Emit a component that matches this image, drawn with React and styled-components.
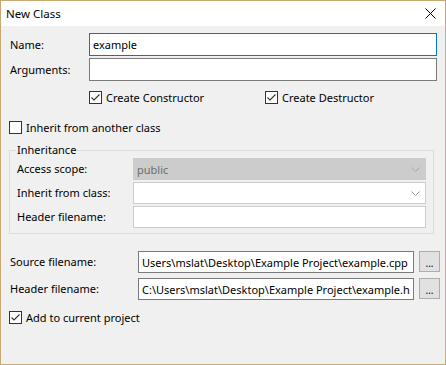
import React from 'react'
import styled, { createGlobalStyle } from 'styled-components'

const GlobalStyle = createGlobalStyle`
  html, body {
    margin: 0;
    padding: 0;
    background: #f0f0f0;
  }
  body {
    font-family: "Noto Sans", "Segoe UI", sans-serif;
    font-size: 11px;
    color: #000;
  }
`

const Window = styled.div`
  width: 446px;
  height: 365px;
  box-sizing: border-box;
  border: 1px solid #c9a973;
  background: #f0f0f0;
  display: flex;
  flex-direction: column;
`

const TitleBar = styled.div`
  height: 25px;
  flex: none;
  background: #fff;
  display: flex;
  align-items: center;
  justify-content: space-between;
  padding: 0 9px 0 5px;
`

const Title = styled.span`
  font-size: 11.5px;
  line-height: 16px;
`

const Body = styled.div`
  padding: 7px 8px 0 8px;
  display: flex;
  flex-direction: column;
`

const Row = styled.div`
  display: grid;
  grid-template-columns: ${({ labelWidth }) => labelWidth}px ${({ fieldWidth }) => fieldWidth}px ${({ button }) => (button ? '21px' : '')};
  column-gap: ${({ button }) => (button ? '5px' : '0')};
  align-items: ${({ button }) => (button ? 'start' : 'center')};
  margin-top: ${({ top }) => top || 0}px;
`

const Label = styled.span`
  padding-left: ${({ indent }) => indent || 0}px;
  line-height: ${({ button }) => (button ? '22px' : '16px')};
  white-space: nowrap;
`

const TextBox = styled.div`
  box-sizing: border-box;
  height: ${({ h }) => h || 22}px;
  background: ${({ disabled }) => (disabled ? '#cccccc' : '#fff')};
  border: 1px solid ${({ focused, soft }) => (focused ? '#0078d7' : soft ? '#cccccc' : '#7a7a7a')};
  color: ${({ disabled }) => (disabled ? '#6d6d6d' : '#000')};
  display: flex;
  align-items: center;
  justify-content: space-between;
  padding: 0 ${({ combo }) => (combo ? 5 : 1)}px 0 3px;
  overflow: hidden;
  white-space: nowrap;
`

const BoxText = styled.span`
  overflow: hidden;
  text-overflow: clip;
  flex: 1;
  min-width: 0;
`

const BrowseButton = styled.div`
  box-sizing: border-box;
  width: 21px;
  height: 21px;
  background: #e1e1e1;
  border: 1px solid #adadad;
  display: flex;
  align-items: center;
  justify-content: center;
  padding-top: 3px;
  font-size: 10px;
  line-height: 12px;
  overflow: hidden;
`

const CheckRow = styled.div`
  display: flex;
  padding-left: ${({ indent }) => indent || 0}px;
  margin-top: ${({ top }) => top || 0}px;
  height: 15px;
`

const CheckItem = styled.label`
  display: flex;
  align-items: center;
  gap: 4px;
  width: ${({ w }) => (w ? `${w}px` : 'auto')};
  line-height: 15px;
  white-space: nowrap;
`

const Box = styled.span`
  box-sizing: border-box;
  width: 13px;
  height: 13px;
  flex: none;
  border: 1px solid #333;
  background: #fff;
  display: flex;
  align-items: center;
  justify-content: center;
`

const Group = styled.fieldset`
  box-sizing: border-box;
  width: 425px;
  margin: 7px 0 0 0;
  padding: 0 6px 5px 7px;
  border: 1px solid #dcdcdc;
  min-width: 0;
`

const Legend = styled.legend`
  padding: 0 1px;
  margin-left: -1px;
  line-height: 16px;
`

const GroupRows = styled.div`
  display: flex;
  flex-direction: column;
  gap: 2px;
`

const Checkbox = ({ checked }) => (
  <Box>
    {checked && (
      <svg width="11" height="11" viewBox="0 0 11 11">
        <polyline points="1.5,5.5 4,8 9.5,2.5" fill="none" stroke="#333" strokeWidth="1.1" />
      </svg>
    )}
  </Box>
)

const Chevron = ({ color }) => (
  <svg width="9" height="5" viewBox="0 0 9 5">
    <polyline points="0.5,0.5 4.5,4.5 8.5,0.5" fill="none" stroke={color} strokeWidth="1" />
  </svg>
)

const CloseIcon = () => (
  <svg width="11" height="11" viewBox="0 0 11 11">
    <path d="M0.5 0.5 L10.5 10.5 M10.5 0.5 L0.5 10.5" stroke="#000" strokeWidth="1" />
  </svg>
)

export default function App() {
  return (
    <Window>
      <GlobalStyle />
      <TitleBar>
        <Title>New Class</Title>
        <CloseIcon />
      </TitleBar>
      <Body>
        <Row labelWidth={80} fieldWidth={348}>
          <Label indent={1}>Name:</Label>
          <TextBox focused h={23}>
            <BoxText>example</BoxText>
          </TextBox>
        </Row>
        <Row labelWidth={80} fieldWidth={348} top={2}>
          <Label indent={1}>Arguments:</Label>
          <TextBox h={23} />
        </Row>

        <CheckRow indent={80} top={9}>
          <CheckItem w={176}>
            <Checkbox checked />
            Create Constructor
          </CheckItem>
          <CheckItem>
            <Checkbox checked />
            Create Destructor
          </CheckItem>
        </CheckRow>

        <CheckRow top={15}>
          <CheckItem>
            <Checkbox />
            Inherit from another class
          </CheckItem>
        </CheckRow>

        <Group>
          <Legend>Inheritance</Legend>
          <GroupRows>
            <Row labelWidth={116} fieldWidth={293}>
              <Label>Access scope:</Label>
              <TextBox disabled soft combo>
                <BoxText>public</BoxText>
                <Chevron color="#a8a8a8" />
              </TextBox>
            </Row>
            <Row labelWidth={116} fieldWidth={293}>
              <Label>Inherit from class:</Label>
              <TextBox soft combo>
                <BoxText />
                <Chevron color="#9a9a9a" />
              </TextBox>
            </Row>
            <Row labelWidth={116} fieldWidth={293}>
              <Label>Header filename:</Label>
              <TextBox soft />
            </Row>
          </GroupRows>
        </Group>

        <Row labelWidth={124} fieldWidth={276} button top={17}>
          <Label indent={1} button>Source filename:</Label>
          <TextBox>
            <BoxText>Users\mslat\Desktop\Example Project\example.cpp</BoxText>
          </TextBox>
          <BrowseButton>...</BrowseButton>
        </Row>
        <Row labelWidth={124} fieldWidth={276} button top={5}>
          <Label indent={1} button>Header filename:</Label>
          <TextBox>
            <BoxText>C:\Users\mslat\Desktop\Example Project\example.h</BoxText>
          </TextBox>
          <BrowseButton>...</BrowseButton>
        </Row>

        <CheckRow top={10}>
          <CheckItem>
            <Checkbox checked />
            Add to current project
          </CheckItem>
        </CheckRow>
      </Body>
    </Window>
  )
}
